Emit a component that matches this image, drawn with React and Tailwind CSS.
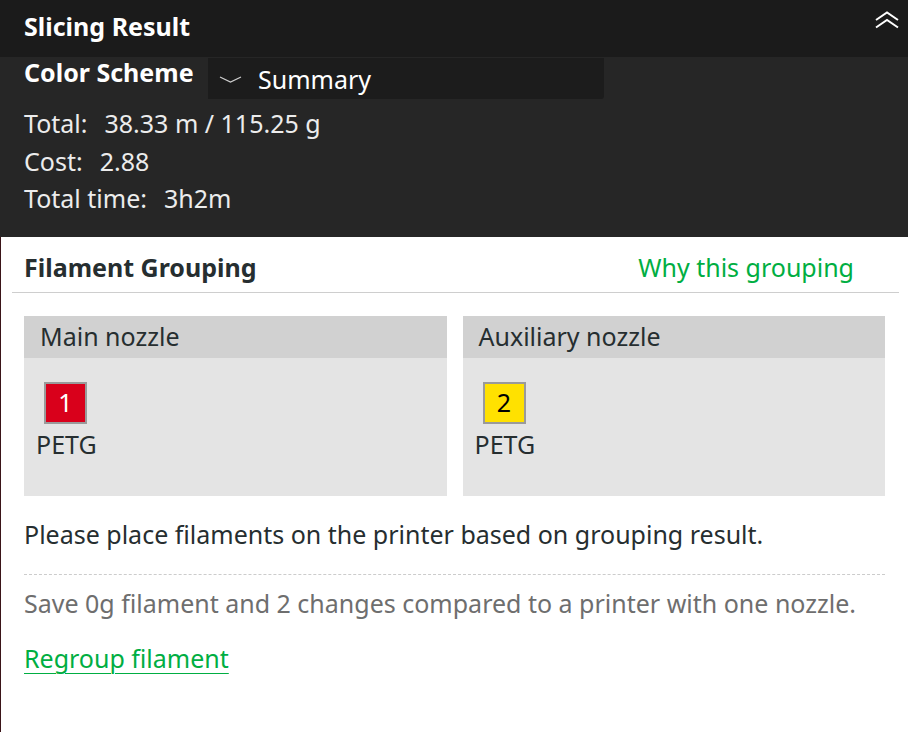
import React from "react";

export default function App() {
  return (
    <div className="w-[908px] h-[732px] flex flex-col bg-white overflow-hidden font-['Noto_Sans','Roboto',sans-serif]">
      {/* header */}
      <div className="h-[57px] shrink-0 bg-[#1b1b1b] flex items-center justify-between pl-6 pr-[8px]">
        <span className="text-[25px] font-bold text-white leading-none -mt-[4px]">Slicing Result</span>
        <svg width="26" height="20" viewBox="0 0 26 20" className="-mt-[18px]">
          <path d="M2 10 L13 2.5 L24 10" fill="none" stroke="#fff" strokeWidth="2" />
          <path d="M2 17.5 L13 10 L24 17.5" fill="none" stroke="#fff" strokeWidth="2" />
        </svg>
      </div>
      {/* dark body */}
      <div className="h-[180px] shrink-0 bg-[#262626] pl-6 text-[#ececec]">
        <div className="flex items-start h-[42px]">
          <span className="text-[25px] font-bold text-white leading-none pt-[3px]">Color Scheme</span>
          <div className="ml-auto mr-[304px] w-[396px] h-[41px] mt-[1px] bg-[#1c1c1c] rounded-br-[3px] flex items-center pl-[11px]">
            <svg width="24" height="8" viewBox="0 0 24 8" className="mt-[3px]">
              <path d="M1 1 L11.5 6 L22 1" fill="none" stroke="#cfcfcf" strokeWidth="1.2" />
            </svg>
            <span className="ml-[15px] text-[25px] text-white leading-none mt-[1px]">Summary</span>
          </div>
        </div>
        <div className="flex flex-col text-[25px] leading-[37.5px] mt-[6px]">
          <div>Total:<span className="ml-[17px]">38.33 m / 115.25 g</span></div>
          <div>Cost:<span className="ml-[17px]">2.88</span></div>
          <div>Total time:<span className="ml-[17px]">3h2m</span></div>
        </div>
      </div>
      {/* white area */}
      <div className="flex-1 border-l-[1.5px] border-[#3a1418] text-[#262e30]">
        <div className="flex items-center justify-between h-[55px] pl-[23px] pr-[54px] pt-[5px]">
          <span className="text-[25px] font-bold leading-none">Filament Grouping</span>
          <span className="text-[25px] text-[#00ae42] leading-none">Why this grouping</span>
        </div>
        <div className="ml-[11px] mr-[9px] h-px bg-[#cecece]" />
        <div className="px-[23px] pr-[23px]">
          <div className="grid grid-cols-2 gap-4 mt-[23px]">
            <Nozzle title="Main nozzle" num="1" swatch="bg-[#d9001b] text-white" />
            <Nozzle title="Auxiliary nozzle" num="2" swatch="bg-[#ffe100] text-black" />
          </div>
          <div className="text-[25px] leading-none mt-[26px]">
            Please place filaments on the printer based on grouping result.
          </div>
          <div className="mt-[27px] border-t border-dashed border-[#cccccc]" />
          <div className="text-[25px] leading-none mt-[16px] text-[#6e6e6e]">
            Save 0g filament and 2 changes compared to a printer with one nozzle.
          </div>
          <div className="mt-[30px]">
            <span className="text-[25px] leading-none text-[#00ae42] underline underline-offset-[5px] decoration-1">
              Regroup filament
            </span>
          </div>
        </div>
      </div>
    </div>
  );
}

function Nozzle({ title, num, swatch }) {
  return (
    <div className="h-[180px] bg-[#e4e4e4] flex flex-col">
      <div className="h-[42px] bg-[#d1d1d1] flex items-center pl-[16px] text-[25px]">{title}</div>
      <div className="pt-[24px] pl-[20px]">
        <div className={`w-[43px] h-[42px] border-2 border-[#9a9a9a] flex items-center justify-center text-[25px] ${swatch}`}>
          {num}
        </div>
        <div className="text-[25px] leading-none mt-[8px] -ml-[8px]">PETG</div>
      </div>
    </div>
  );
}
